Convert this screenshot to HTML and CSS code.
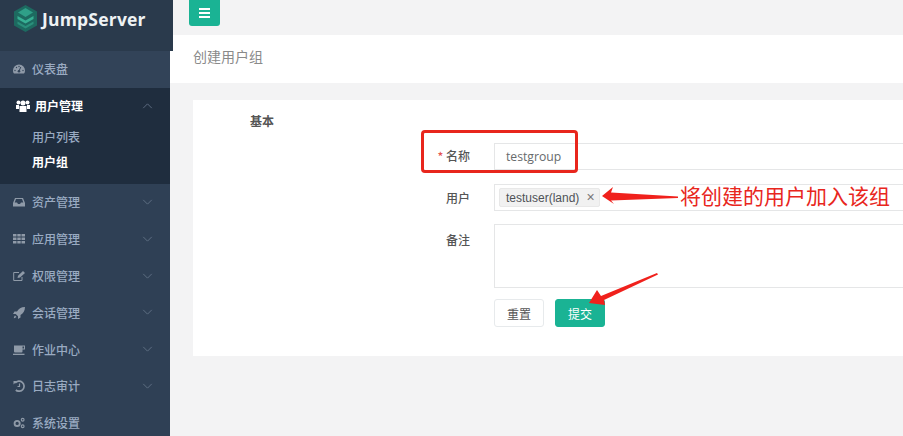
FILE: index.html
```html
<!DOCTYPE html>
<html lang="zh">
<head>
<meta charset="utf-8">
<title>创建用户组</title>
<link rel="stylesheet" href="styles.css">
</head>
<body>
<div class="app">
  <aside class="sidebar">
    <div class="logo">
      <svg class="logo-mark" viewBox="0 0 23 27" width="23" height="27">
        <path d="M11.500 0 23 6.500V20.500L11.500 27 0 20.500V6.500Z" fill="#1d6a60"/>
        <path d="M11.500 3 19 7.500 11.500 12 4 7.500Z" fill="#2f9f88"/>
        <path d="M3.500 11 11.500 15.500 19.500 11V14L11.500 18.500 3.500 14Z" fill="#37b094"/>
        <path d="M3.500 16.500 11.500 21 19.500 16.500V19L11.500 23.500 3.500 19Z" fill="#2a8f7b"/>
      </svg>
      <span class="logo-text">JumpServer</span>
    </div>
    <nav class="menu">
      <a class="item item-light">
        <svg class="ico" viewBox="0 0 12 12"><path d="M6 1.500A6 6 0 0 0 0 7.500C0 9 .5 10 1 10.500H11C11.500 10 12 9 12 7.500A6 6 0 0 0 6 1.500Z" fill="#8f9aa8"/><circle cx="6" cy="8.300" r="1.300" fill="#324358"/><path d="M6 8 7.800 4" stroke="#324358"/><circle cx="2" cy="7.500" r=".7" fill="#324358"/><circle cx="3.500" cy="4.500" r=".7" fill="#324358"/><circle cx="6" cy="3.500" r=".7" fill="#324358"/><circle cx="10" cy="7.500" r=".7" fill="#324358"/></svg>
        <span>仪表盘</span>
      </a>
      <div class="group">
        <a class="item item-open">
          <svg class="ico ico-users" viewBox="0 0 14 12"><circle cx="7" cy="3" r="2.500" fill="#fff"/><circle cx="2.500" cy="2.500" r="2" fill="#fff"/><circle cx="11.500" cy="2.500" r="2" fill="#fff"/><path d="M3.500 6H10.500V12H3.500ZM0 5H3V9H0ZM11 5H14V9H11Z" fill="#fff"/></svg>
          <span>用户管理</span>
          <svg class="chev" viewBox="0 0 12 7"><path d="M1 6 6 1 11 6" fill="none" stroke="#66758a"/></svg>
        </a>
        <a class="sub">用户列表</a>
        <a class="sub sub-active">用户组</a>
      </div>
      <a class="item">
        <svg class="ico" viewBox="0 0 12 12"><path d="M2 2H10L12 7V10.500H0V7ZM3 3 1.700 6.500H4L5 8H7L8 6.500H10.300L9 3Z" fill="#8f9aa8" fill-rule="evenodd"/></svg>
        <span>资产管理</span>
        <svg class="chev" viewBox="0 0 12 7"><path d="M1 1 6 6 11 1" fill="none" stroke="#66758a"/></svg>
      </a>
      <a class="item">
        <svg class="ico" viewBox="0 0 12 12"><path d="M0 1H3.500V3.500H0ZM4.300 1H7.700V3.500H4.300ZM8.500 1H12V3.500H8.500ZM0 4.500H3.500V7H0ZM4.300 4.500H7.700V7H4.300ZM8.500 4.500H12V7H8.500ZM0 8H3.500V10.500H0ZM4.300 8H7.700V10.500H4.300ZM8.500 8H12V10.500H8.500Z" fill="#8f9aa8"/></svg>
        <span>应用管理</span>
        <svg class="chev" viewBox="0 0 12 7"><path d="M1 1 6 6 11 1" fill="none" stroke="#66758a"/></svg>
      </a>
      <a class="item">
        <svg class="ico" viewBox="0 0 12 12"><path d="M9 7V10.500H.700V2.500H6" fill="none" stroke="#8f9aa8"/><path d="M4.500 8 5 5.800 10 1 12 3 7 7.500Z" fill="#8f9aa8"/></svg>
        <span>权限管理</span>
        <svg class="chev" viewBox="0 0 12 7"><path d="M1 1 6 6 11 1" fill="none" stroke="#66758a"/></svg>
      </a>
      <a class="item">
        <svg class="ico" viewBox="0 0 12 12"><path d="M12 0C8 0 5.500 2 4 4.500H1.500L0 7H2.700L5 9.300V12L7.500 10.500V8C10 6.500 12 4 12 0ZM2 8.500C1 9.500 .8 11.200 .8 11.200S2.500 11 3.500 10Z" fill="#8f9aa8"/></svg>
        <span>会话管理</span>
        <svg class="chev" viewBox="0 0 12 7"><path d="M1 1 6 6 11 1" fill="none" stroke="#66758a"/></svg>
      </a>
      <a class="item">
        <svg class="ico" viewBox="0 0 12 12"><path d="M1 1.500H12V5.500H9.500V7.500A1 1 0 0 1 8.500 8.500H2A1 1 0 0 1 1 7.500ZM9.500 2.500V4.500H11V2.500Z" fill="#8f9aa8" fill-rule="evenodd"/><path d="M0 9.700H11.500V11H0Z" fill="#8f9aa8"/></svg>
        <span>作业中心</span>
        <svg class="chev" viewBox="0 0 12 7"><path d="M1 1 6 6 11 1" fill="none" stroke="#66758a"/></svg>
      </a>
      <a class="item">
        <svg class="ico" viewBox="0 0 12 12"><path d="M2.200 3A5 5 0 1 1 2.800 10" fill="none" stroke="#8f9aa8" stroke-width="1.700"/><path d="M.5 1H4L.5 4.500Z" fill="#8f9aa8"/><path d="M6.500 3.500V6.500H4.500" fill="none" stroke="#8f9aa8" stroke-width="1.200"/></svg>
        <span>日志审计</span>
        <svg class="chev" viewBox="0 0 12 7"><path d="M1 1 6 6 11 1" fill="none" stroke="#66758a"/></svg>
      </a>
      <a class="item">
        <svg class="ico" viewBox="0 0 13 12"><circle cx="4.500" cy="6.500" r="2.800" fill="none" stroke="#8f9aa8" stroke-width="2"/><circle cx="10.500" cy="2.500" r="1.500" fill="none" stroke="#8f9aa8" stroke-width="1.200"/><circle cx="10.500" cy="9.500" r="1.500" fill="none" stroke="#8f9aa8" stroke-width="1.200"/></svg>
        <span>系统设置</span>
      </a>
    </nav>
  </aside>
  <main class="main">
    <div class="topbar">
      <button class="burger" type="button" aria-label="菜单">
        <svg viewBox="0 0 11 10" width="11" height="10"><path d="M0 0H11V2H0ZM0 4H11V6H0ZM0 8H11V10H0Z" fill="#fff"/></svg>
      </button>
    </div>
    <div class="heading">创建用户组</div>
    <section class="content">
      <form class="card">
        <div class="section-title">基本</div>
        <div class="row row-name">
          <label class="label"><span class="req">*</span> 名称</label>
          <div class="input input-text">testgroup</div>
        </div>
        <div class="row row-user">
          <label class="label label-user">用户</label>
          <div class="input input-tags"><span class="tag">testuser(land)<span class="tag-x">×</span></span></div>
        </div>
        <div class="row row-note">
          <label class="label label-top">备注</label>
          <div class="input textarea"></div>
        </div>
        <div class="actions">
          <button class="btn" type="button">重置</button>
          <button class="btn btn-primary" type="button">提交</button>
        </div>
      </form>
    </section>
  </main>
</div>
<div class="callout-box"></div>
<div class="callout-text">将创建的用户加入该组</div>
<svg class="callout-arrows" viewBox="0 0 903 436" width="903" height="436">
  <path d="M602 196 613 187 611 192.500 678 196.500V198L611 200.500 614 204Z" fill="#f0211c"/>
  <path d="M589 303 597 290 601 296 657 273 658 274.500 604 300 605 305Z" fill="#f0211c"/>
</svg>
</body>
</html>
```

FILE: styles.css
```css
* { box-sizing: border-box; }
html, body { margin: 0; padding: 0; width: 903px; height: 436px; overflow: hidden; }
body { position: relative; background: #f3f3f4; font-family: "Noto Sans CJK SC", "Liberation Sans", sans-serif; font-size: 12px; color: #676a6c; }
a { display: flex; text-decoration: none; }
.app { display: flex; height: 436px; }

.sidebar { width: 170px; flex: none; background: #2f4055; display: flex; flex-direction: column; }
.logo { width: 173px; height: 51px; flex: none; background: #2a3a4c; display: flex; align-items: flex-start; gap: 5px; padding: 5px 0 0 14px; position: relative; z-index: 1; }
.logo-text { font-family: "Open Sans", sans-serif; font-weight: 700; font-size: 17.500px; line-height: 29px; color: #eef2f4; letter-spacing: .2px; }
.menu { display: flex; flex-direction: column; }
.item { height: 36.800px; flex: none; align-items: center; padding: 0 0 0 13px; font-weight: 500; color: #9aabc2; position: relative; }
.item-light { background: #324358; }
.item span { line-height: 24px; margin-left: 7px; }
.ico { width: 12px; height: 12px; flex: none; }
.chev { width: 11px; height: 6px; position: absolute; left: 142px; top: 15px; }
.group { background: #1f2d3e; height: 96.200px; flex: none; }
.item-open { color: #fff; font-weight: 700; padding-left: 16px; }
.item-open span { margin-left: 5px; }
.ico-users { width: 14px; }
.sub { height: 25px; align-items: center; padding: 0 0 2px 32px; color: #9aabc2; font-weight: 500; }
.sub-active { color: #fff; font-weight: 700; }

.main { flex: 1; min-width: 0; display: flex; flex-direction: column; }
.topbar { height: 35px; flex: none; padding-left: 19px; }
.burger { width: 31px; height: 26px; border: 0; padding: 0; background: #1ab394; border-radius: 0 0 3px 3px; display: flex; align-items: center; justify-content: center; }
.heading { height: 48px; flex: none; background: #fff; padding-left: 23px; font-size: 14px; line-height: 42px; color: #8a8a8a; }
.content { flex: 1; padding: 17px 0 0 23px; }
.card { height: 256px; background: #fff; display: flex; flex-direction: column; padding: 13px 0 0 57px; }
.section-title { font-weight: 700; line-height: 16px; color: #555; }
.row { display: flex; align-items: center; }
.row-name { margin-top: 14px; height: 27px; }
.row-user { margin-top: 14px; height: 27px; }
.row-note { margin-top: 13px; height: 64px; align-items: flex-start; }
.label { width: 244px; flex: none; text-align: right; padding: 0 24px 2px 0; font-weight: 500; color: #555; }
.label-user { padding-bottom: 0; }
.label-top { padding-top: 7px; }
.req { color: #e5554f; }
.input { flex: 1; height: 100%; border: 1px solid #e5e6e7; margin-right: -20px; }
.input-text { font-family: "Open Sans", sans-serif; font-size: 12.200px; line-height: 26px; padding-left: 11px; color: #676a6c; }
.input-tags { padding: 3px 0 0 4px; }
.tag { display: inline-block; height: 19px; width: 101px; background: #f1f1f1; border: 1px solid #e8e8e8; border-radius: 2px; padding-left: 6px; font-family: "Liberation Sans", sans-serif; font-size: 12px; line-height: 17px; color: #4f5257; white-space: nowrap; }
.tag-x { margin-left: 7px; font-size: 14px; color: #777; }
.actions { display: flex; gap: 11px; margin: 11px 0 0 244px; }
.btn { width: 50px; height: 28px; padding: 0; border: 1px solid #e7eaec; border-radius: 3px; background: #fff; color: #555; font: 400 12px "Noto Sans CJK SC", sans-serif; }
.btn-primary { background: #1ab394; border-color: #1ab394; color: #fff; }

.callout-box { position: absolute; left: 421px; top: 130px; width: 157px; height: 43px; border: 3px solid #e8261d; border-radius: 4px; }
.callout-text { position: absolute; left: 680px; top: 180px; font-size: 21px; line-height: 30px; color: #e8261d; white-space: nowrap; font-weight: 400; }
.callout-arrows { position: absolute; left: 0; top: 0; pointer-events: none; }
```
